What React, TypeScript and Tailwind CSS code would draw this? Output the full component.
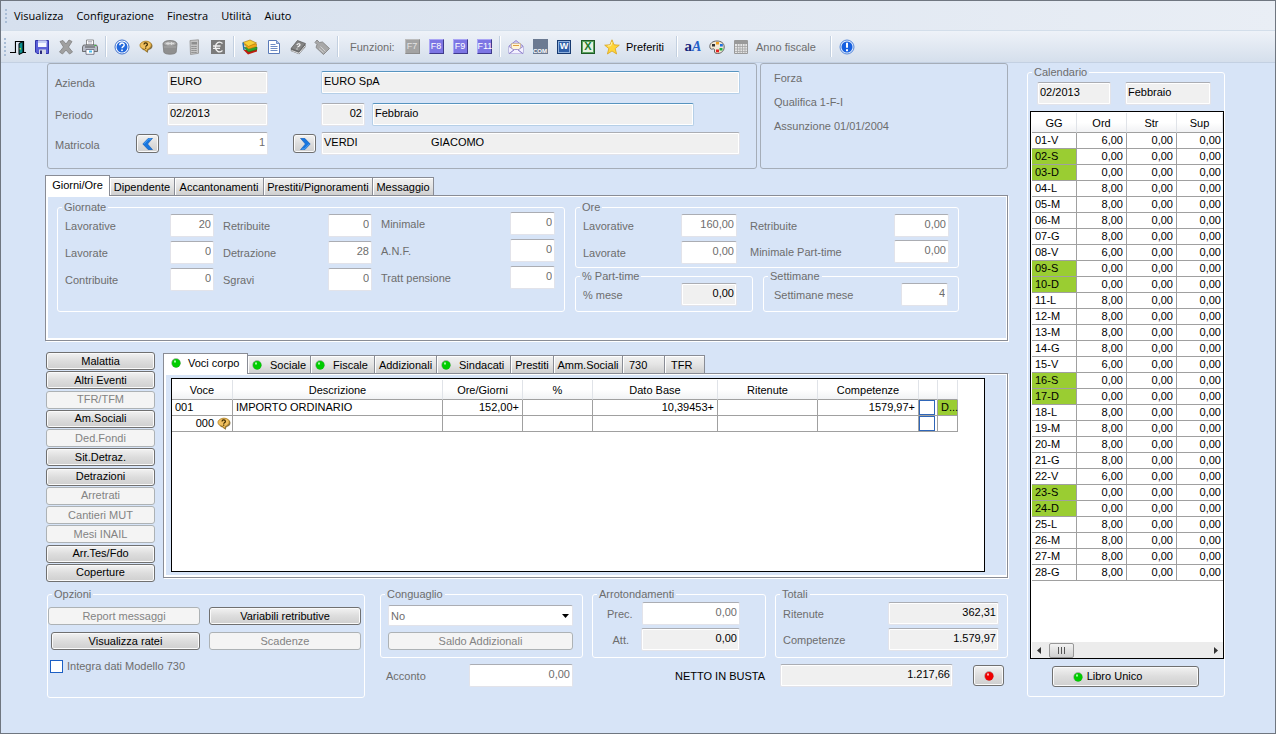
import React, { useId } from "react";

type Tone = "read" | "edit" | "hot";

const toneClass: Record<Tone, string> = {
  read: "bg-[#f0f0f0] text-black border-[#e2e3ea] border-t-[#abadb3]",
  edit: "bg-white text-[#6d6d6d] border-[#e2e3ea] border-t-[#abadb3]",
  hot: "bg-[#f0f0f0] text-black border-[#b5cfe7] border-t-[#5794bf]",
};

interface BoxProps {
  value: string;
  tone?: Tone;
  className?: string;
  right?: boolean;
  id?: string;
  label?: string;
}

function Box({ value, tone = "edit", className = "", right, id, label }: BoxProps) {
  return (
    <input
      id={id}
      aria-label={label}
      defaultValue={value}
      readOnly={tone !== "edit"}
      className={`h-[23px] min-w-0 rounded-[2px] border px-[2px] pb-[3px] outline-none shadow-[inset_0_0_0_1px_white] ${toneClass[tone]} ${right ? "text-right" : ""} ${className}`}
    />
  );
}

interface RowProps {
  label: string;
  value: string;
  tone?: Tone;
  rowClass?: string;
  width: string;
}

function Row({ label, value, tone, width, rowClass = "justify-between" }: RowProps) {
  const id = useId();
  return (
    <div className={`flex items-center ${rowClass}`}>
      <label htmlFor={id} className="whitespace-nowrap">{label}</label>
      <Box id={id} value={value} tone={tone} right className={width} />
    </div>
  );
}

function Group({ title, className = "", inner = "", children }: { title: string; className?: string; inner?: string; children: React.ReactNode }) {
  return (
    <fieldset className={`min-w-0 rounded-[3px] border border-white ${className}`}>
      <legend className="ml-[4px] h-[14px] px-[2px] leading-[14px]">{title}</legend>
      <div className={inner}>{children}</div>
    </fieldset>
  );
}

function Push({ children, off, className = "" }: { children: React.ReactNode; off?: boolean; className?: string }) {
  return (
    <button
      type="button"
      disabled={off}
      className={`flex items-center justify-center rounded-[3px] border leading-none ${
        off
          ? "border-[#adb2b5] bg-[#f4f4f4] text-[#838383]"
          : "border-[#707070] bg-linear-to-b from-[#f2f2f2] from-0% via-[#dddddd] via-50% to-[#cfcfcf] text-black shadow-[inset_0_0_0_1px_#fafafa]"
      } ${className}`}
    >
      {children}
    </button>
  );
}

function Led({ red }: { red?: boolean }) {
  return (
    <svg viewBox="0 0 10 10" className="size-[10px] shrink-0" aria-hidden="true">
      <circle cx="5" cy="5" r="4.700" fill={red ? "#b08080" : "#8aa58a"} />
      <circle cx="5.200" cy="5.200" r="4.200" fill={red ? "#f00000" : "#00cc00"} />
      <rect x="3" y="2.500" width="2" height="2" fill={red ? "#ffb0b0" : "#a0ffa0"} />
    </svg>
  );
}

function Tab({ text, active, led, start, className }: { text: string; active?: boolean; led?: boolean; start?: boolean; className: string }) {
  const place = led ? (active ? "gap-[7px] pl-[7px]" : "gap-2 pl-[4px]") : start ? "pl-[6px]" : "justify-center";
  return (
    <button
      type="button"
      role="tab"
      aria-selected={!!active}
      className={`flex items-center whitespace-nowrap border border-b-0 border-[#898c95] text-black ${
        active ? "z-10 -mb-px h-[21px] bg-white pb-[3px]" : "-ml-px h-[18px] bg-linear-to-b from-[#f2f2f2] via-[#e4e4e4] to-[#cfcfcf] shadow-[inset_1px_1px_0_white]"
      } ${place} ${className}`}
    >
      {led && <Led />}
      {text}
    </button>
  );
}

function Chevron({ flip }: { flip?: boolean }) {
  return (
    <svg viewBox="0 0 12 12" className={flip ? "size-3 rotate-180" : "size-3"} aria-hidden="true">
      <path d="M10.500 0.300 L6.300 0.300 L0.800 6 L6.300 11.700 L10.500 11.700 L5.600 6 Z" fill="#1877e0" stroke="#0d57b5" strokeWidth="0.600" />
      <path d="M9.300 1 L6.600 1 L2 5.800" stroke="#5bb0ff" strokeWidth="0.800" fill="none" />
    </svg>
  );
}

/* ---------- toolbar drawings ---------- */

function Svg({ children }: { children: React.ReactNode }) {
  return (
    <svg viewBox="0 0 16 16" className="size-4" fill="none" aria-hidden="true">
      {children}
    </svg>
  );
}

const Door = () => (
  <Svg>
    <path d="M0 13.500h6M12 13.500h4" stroke="#000" />
    <path d="M5.500 14V2.500h8V14" stroke="#000" strokeWidth="1.200" />
    <path d="M6 3h4v10H6z" fill="#dfe8f2" />
    <path d="M9 4.500 13 2.500v11L9 15.500z" fill="#0d8f8f" stroke="#000" />
    <path d="M10.200 9v1.500" stroke="#ff0" />
  </Svg>
);
const Floppy = () => (
  <Svg>
    <path d="M1.500 1.500h13v13H3l-1.500-1.500z" fill="#5b60d8" stroke="#3034a8" />
    <path d="M4 1.500h8.500V8H4z" fill="#f4f6ff" />
    <path d="M4 2h8.500v2H4z" fill="#c4cef4" />
    <path d="M5 10.500h7V15H5z" fill="#d4d8e6" />
    <path d="M6 11.500h2V15H6z" fill="#2a2a7c" />
  </Svg>
);
const Cross = () => (
  <Svg>
    <path d="M2 2.500 5 1.500 8 5l3-4 3 1.500L10.500 8l4 5-3 2L8 11l-3.500 4L1.500 13 5.500 8z" fill="#a0a0a0" stroke="#808080" strokeWidth="0.800" />
  </Svg>
);
const Printer = () => (
  <Svg>
    <path d="M4.500 1h7v5h-7z" fill="#fff" stroke="#777" strokeWidth="0.800" />
    <path d="M6 2.500h4M6 4h4" stroke="#99a" strokeWidth="0.700" />
    <path d="M1.500 6h13l1 2v4.500H.5V8z" fill="#b8bcc8" stroke="#555" strokeWidth="0.800" />
    <path d="M3 8h10" stroke="#555" />
    <path d="M4 10.500h8v4.800H4z" fill="#fff" stroke="#667" strokeWidth="0.800" />
    <path d="M7 11.500h3v2H7z" fill="#4bbdf0" />
    <path d="M12.500 6.500h1.500" stroke="#33c833" />
  </Svg>
);
const HelpBall = () => (
  <Svg>
    <circle cx="8" cy="8" r="7" fill="#fff" stroke="#2c62c8" strokeWidth="0.900" />
    <circle cx="8" cy="8" r="5.500" fill="#2268dc" />
    <path d="M5.800 6.300c0-3 4.400-3 4.400-.3 0 1.700-2.200 1.600-2.200 3.300" stroke="#fff" strokeWidth="1.400" />
    <rect x="7.200" y="10.500" width="1.600" height="1.600" fill="#fff" />
  </Svg>
);
const InfoBall = () => (
  <Svg>
    <circle cx="8" cy="8" r="7" fill="#dce8fa" stroke="#4a7fd8" strokeWidth="0.900" />
    <circle cx="8" cy="8" r="5.500" fill="#1660e0" />
    <path d="M8 3.800v5" stroke="#fff" strokeWidth="2" />
    <rect x="7" y="10.200" width="2" height="2" fill="#fff" />
  </Svg>
);
const AskBubble = () => (
  <Svg>
    <path d="M3 6.500C3 4 6 3 9 3s5.500 1.500 5.500 4-2 3.500-4 4l-1 3-2-2.500C5 11.500 3 9.500 3 6.500z" fill="#5f4712" opacity=".75" />
    <path d="M2 6.300C2 4 5 2.200 8 2.200s5.300 1.500 5.300 3.800S11 9.800 9.500 10.300l-1.200 2.500-1.500-2.500C4 10 2 8.600 2 6.300z" fill="#f0c060" stroke="#a87818" strokeWidth="0.800" />
    <path d="M6 5.400c0-2 3.400-2 3.400 0 0 1.300-1.700 1.200-1.700 2.300M7.700 8.600v1.200" stroke="#3a2800" strokeWidth="1.200" />
  </Svg>
);
const Basket = () => (
  <Svg>
    <path d="M1 5c0-2 3-3.500 7-3.500S15 3 15 5l-.8 8c-.2 1.500-3 2.200-6.200 2.200S2 14.500 1.800 13z" fill="#8f8f8f" stroke="#7c7c7c" strokeWidth="0.800" />
    <ellipse cx="8" cy="4.500" rx="5.800" ry="2" fill="#b4b4b4" />
    <path d="M4 4.500h8M6 3v3M9.500 3v3" stroke="#dedede" strokeWidth="0.900" />
    <path d="M2 8h12" stroke="#a8a8a8" />
  </Svg>
);
const Calc = () => (
  <Svg>
    <path d="M4 1.500 12.500.8v13.500L4.500 15.500z" fill="#c4c4c4" stroke="#989898" strokeWidth="0.900" />
    <path d="M5.500 3h5.500v2.500H5.500z" fill="#8e8e8e" />
    <path d="M5.500 7.500h5.500M5.500 9.500h5.500M5.500 11.500h5.500M5.500 13.500h5.500" stroke="#7b7b7b" strokeDasharray="1.200 .7" />
  </Svg>
);
const Euro = () => (
  <Svg>
    <path d="M1 1h14v14H1z" fill="#7b7b7b" />
    <path d="M12.500 4.500C9 1.500 5.500 4 5.500 8s3.500 6.500 7 3.500M3 7h7.500M3 9.300h7" stroke="#f2f2f2" strokeWidth="1.300" />
  </Svg>
);
const Books = () => (
  <Svg>
    <path d="M1.500 11 6 15.500l9-3V10z" fill="#c01d10" />
    <path d="M2 8.500 6.500 13 15 10.500V8z" fill="#2ca32c" stroke="#127012" strokeWidth="0.500" />
    <path d="M2 5.500 6.500 10 14.500 7.500V5z" fill="#f3a715" stroke="#b87000" strokeWidth="0.500" />
    <path d="M1 3.500 8 1l6.500 3L6.500 7.500z" fill="#f8d038" stroke="#a56f00" strokeWidth="0.600" />
    <path d="M1 3.500 2 11" stroke="#2070b0" strokeWidth="1.500" />
  </Svg>
);
const Doc = () => (
  <Svg>
    <path d="M2.500 1.500h8l3 3v10h-11z" fill="#fff" stroke="#5a7ab8" />
    <path d="M10.500 1.500v3h3" fill="#a9c0e8" stroke="#5a7ab8" strokeWidth="0.800" />
    <path d="M4.500 5.500h5M4.500 7.500h7M4.500 9.500h7M4.500 11.500h7" stroke="#6d8bc4" />
  </Svg>
);
const GreyBook = () => (
  <Svg>
    <path d="M.8 10 7.500 1.500 15.500 5v3L9 15.200.8 12z" fill="#6f6f6f" />
    <path d="M1 9.500 7.500 1.500l8 3L9 12.500z" fill="#858585" stroke="#5e5e5e" strokeWidth="0.700" />
    <path d="M1.500 11.500 9 14.300 15 7" stroke="#e0e0e0" />
    <path d="M6.800 6c1-2.200 4-1.300 3 .4-.7 1-2 .7-2.200 2M7 9.500v1" stroke="#fff" strokeWidth="1.100" />
  </Svg>
);
const GreyTag = () => (
  <Svg>
    <path d="M1 3.500 3 1l2.500 2.500L8.500 3l7 6.500-6 6L2 8.500 3 5.500z" fill="#a8a8a8" stroke="#858585" strokeWidth="0.900" />
    <path d="m5 9.500 4.500 4M6.500 7.500l5 5" stroke="#cfcfcf" />
  </Svg>
);
const Mail = () => (
  <Svg>
    <path d="M1 7 8 1.500 15 7v7.500H1z" fill="#cfc7f0" stroke="#8f83cc" strokeWidth="0.900" />
    <path d="M3.500 4.500h9v6h-9z" fill="#fff5d8" stroke="#c5a878" strokeWidth="0.600" />
    <path d="M5 6.500h6" stroke="#e0a040" />
    <path d="m1 7.500 5 3.500-5 3.500M15 7.500 10 11l5 3.500M1.500 14.500l5-4h3l5 4" fill="#f3f0ff" stroke="#8f83cc" strokeWidth="0.800" />
  </Svg>
);
const Star = () => (
  <Svg>
    <path d="m8 .8 2 5 5.300.4-4.100 3.400 1.400 5.400L8 12l-4.600 3 1.400-5.400L.7 6.200 6 5.800z" fill="#ffd53a" stroke="#dba51d" strokeWidth="0.800" />
    <path d="m8 3-1.300 3.700-3 .3" stroke="#fff3b0" />
  </Svg>
);
const Palette = () => (
  <Svg>
    <path d="M8 2C3.500 2 .8 4.500.8 7.500c0 2.500 1.700 3 2.700 2.500 1.500-.6 2.500.4 2 2-.4 1.500.8 2.500 3 2.500 4 0 6.700-3 6.700-6.500C15.200 4 12 2 8 2z" fill="#f1e8d5" stroke="#555" strokeWidth="0.900" />
    <rect x="3" y="5" width="3" height="2.500" fill="#333" />
    <rect x="7" y="3" width="3" height="2.500" fill="#f0a020" />
    <rect x="11" y="5" width="2.800" height="2.500" fill="#2070e0" />
    <rect x="10.500" y="9" width="3" height="2.500" fill="#20b040" />
    <rect x="7" y="10.500" width="3" height="2.800" fill="#e02020" />
  </Svg>
);
const GreyCal = () => (
  <Svg>
    <path d="M1.500 1.500h13v13h-13z" fill="#e4e4e4" stroke="#999" />
    <path d="M1.500 2h13v3h-13z" fill="#9a9a9a" />
    <path d="M2 7.500h12M2 10h12M2 12.500h12M4.500 5v9.500M7 5v9.500M9.500 5v9.500M12 5v9.500" stroke="#a5a5a5" strokeWidth="0.800" />
  </Svg>
);
const Word = () => (
  <span className="grid size-[14px] place-items-center border border-[#173a70] bg-[#2f5fa8] text-[9px] leading-none font-bold text-white shadow-[inset_0_0_0_1px_#8fb0dc]">W</span>
);
const Excel = () => (
  <span className="grid size-[14px] place-items-center border border-[#1d5a24] bg-[#e4f1e2] text-[11px] leading-none font-bold text-[#1f7a2c] shadow-[inset_0_0_0_1px_#5ba35f]">X</span>
);
const Com = () => (
  <span className="flex size-[15px] items-end justify-center overflow-hidden bg-[#6b7a92] text-[6px] leading-[6px] font-bold text-white">COM</span>
);
const LetterA = () => (
  <span className="flex items-baseline font-['Liberation_Serif'] leading-none font-bold">
    <span className="text-[15px] text-[#16267c]">a</span>
    <span className="text-[14px] text-[#2460c8] italic">A</span>
  </span>
);
const FKey = ({ text, off }: { text: string; off?: boolean }) => (
  <span
    className={`grid size-[15px] place-items-center border text-[9px] leading-none ${
      off
        ? "border-[#8b8b8b] border-t-[#bcbcbc] border-l-[#bcbcbc] bg-[#a3a3a3] text-[#e3e3e3]"
        : "border-[#3f3a8c] border-t-[#aaa5f5] border-l-[#aaa5f5] bg-[#7d76e4] text-white"
    }`}
  >
    {text}
  </span>
);

function Tool({ name, children, className = "w-6 justify-center" }: { name: string; children: React.ReactNode; className?: string }) {
  return (
    <button type="button" aria-label={name} className={`flex h-6 shrink-0 items-center ${className}`}>
      {children}
    </button>
  );
}

const Sep = () => <span className="mx-[3px] h-[21px] w-[2px] shrink-0 border-l border-[#c3d0e0] bg-white" />;

const Grip = ({ className }: { className: string }) => (
  <span className={`w-[2px] shrink-0 bg-[repeating-linear-gradient(to_bottom,#a9bdd6_0px,#a9bdd6_2px,transparent_2px,transparent_4px)] ${className}`} />
);

/* ---------- data ---------- */

const sideButtons: [string, boolean][] = [
  ["Malattia", true],
  ["Altri Eventi", true],
  ["TFR/TFM", false],
  ["Am.Sociali", true],
  ["Ded.Fondi", false],
  ["Sit.Detraz.", true],
  ["Detrazioni", true],
  ["Arretrati", false],
  ["Cantieri MUT", false],
  ["Mesi INAIL", false],
  ["Arr.Tes/Fdo", true],
  ["Coperture", true],
];

const weekdays = ["V", "S", "D", "L", "M", "M", "G"];
const days = Array.from({ length: 28 }, (_, i) => {
  const letter = weekdays[i % 7];
  const rest = letter === "S" || letter === "D";
  return {
    label: `${String(i + 1).padStart(2, "0")}-${letter}`,
    rest,
    ord: rest ? "0,00" : letter === "V" ? "6,00" : "8,00",
  };
});

const head = "h-[20px] border-b border-[#a0a0a0] border-r border-r-[#e0e3e8] bg-linear-to-b from-white from-50% to-[#f1f2f4] p-0 text-center font-normal";
const cell = "h-[16px] border-r border-b border-[#a0a0a0] px-[3px] py-0 leading-[15px]";
const tick = "block h-[15px] w-[16px] appearance-none border border-[#2f66b8] bg-white";

export default function App() {
  const azienda = useId();
  const periodo = useId();
  const matricola = useId();
  const acconto = useId();
  const netto = useId();

  return (
    <div className="min-h-screen w-full border border-[#6f7680] bg-[#d7e4f7] font-['Liberation_Sans',Arial,sans-serif] text-[11px] leading-[16px] text-[#6d6d6d]">
      <nav className="flex h-[29px] items-center bg-linear-to-r from-[#d6e0ee] to-[#e9eef5] pl-1 font-['Open_Sans',sans-serif] text-black">
        <Grip className="mr-[7px] h-[14px]" />
        <div className="flex gap-[13px]">
          {["Visualizza", "Configurazione", "Finestra", "Utilità", "Aiuto"].map((m) => (
            <button type="button" key={m}>{m}</button>
          ))}
        </div>
      </nav>

      <div className="flex h-[33px] items-center border-t border-[#d3deea] border-b border-b-[#c3d0e2] bg-linear-to-b from-[#eef2f8] to-[#d5dfec] pl-[3px]" role="toolbar">
        <Grip className="h-[18px]" />
        <Tool name="Esci"><Door /></Tool>
        <Tool name="Salva"><Floppy /></Tool>
        <Tool name="Elimina"><Cross /></Tool>
        <Tool name="Stampa"><Printer /></Tool>
        <Sep />
        <Tool name="Guida"><HelpBall /></Tool>
        <Tool name="Chiedi"><AskBubble /></Tool>
        <Tool name="Archivio"><Basket /></Tool>
        <Tool name="Calcolatrice"><Calc /></Tool>
        <Tool name="Euro"><Euro /></Tool>
        <Sep />
        <Tool name="Libri"><Books /></Tool>
        <Tool name="Documento"><Doc /></Tool>
        <Tool name="Manuale"><GreyBook /></Tool>
        <Tool name="Etichetta"><GreyTag /></Tool>
        <Sep />
        <span className="w-[58px] shrink-0 pl-2">Funzioni:</span>
        <Tool name="F7"><FKey text="F7" off /></Tool>
        <Tool name="F8"><FKey text="F8" /></Tool>
        <Tool name="F9"><FKey text="F9" /></Tool>
        <Tool name="F11"><FKey text="F11" /></Tool>
        <Sep />
        <Tool name="Posta"><Mail /></Tool>
        <Tool name="Com"><Com /></Tool>
        <Tool name="Word"><Word /></Tool>
        <Tool name="Excel"><Excel /></Tool>
        <Tool name="Preferiti" className="w-[73px] gap-[6px] pl-1 text-black"><Star />Preferiti</Tool>
        <Sep />
        <Tool name="Carattere"><LetterA /></Tool>
        <Tool name="Colori"><Palette /></Tool>
        <Tool name="Anno fiscale" className="w-[98px] gap-[7px] pl-1"><GreyCal />Anno fiscale</Tool>
        <Sep />
        <Tool name="Informazioni"><InfoBall /></Tool>
      </div>

      <div className="flex items-start justify-between gap-[19px] pr-[50px] pl-11">
        <main className="min-w-0 flex-1">
          <div className="flex gap-[3px] pl-[2px]">
            <section className="flex min-w-0 flex-1 flex-col rounded-[3px] border border-[#a5adb8] pt-[7px] pr-4 pb-[13px] pl-[7px]">
              <div className="flex items-center">
                <label htmlFor={azienda} className="w-[112px]">Azienda</label>
                <Box id={azienda} value="EURO" tone="read" className="w-[101px]" />
                <Box label="Ragione sociale" value="EURO SpA" tone="hot" className="ml-[53px] flex-1" />
              </div>
              <div className="mt-[9px] flex items-center">
                <label htmlFor={periodo} className="w-[112px]">Periodo</label>
                <Box id={periodo} value="02/2013" tone="read" className="w-[101px]" />
                <Box label="Numero mese" value="02" tone="read" right className="ml-[53px] w-[44px]" />
                <Box label="Mese" value="Febbraio" tone="hot" className="mr-[46px] ml-[7px] flex-1" />
              </div>
              <div className="mt-[6px] flex items-center">
                <label htmlFor={matricola} className="w-[81px] pt-[3px]">Matricola</label>
                <Push className="h-[19px] w-[23px]"><Chevron /></Push>
                <Box id={matricola} value="1" right className="ml-2 w-[101px]" />
                <Push className="ml-[25px] h-[19px] w-[23px]"><Chevron flip /></Push>
                <span className="ml-[5px] flex h-[23px] flex-1 rounded-[2px] border border-[#e2e3ea] border-t-[#abadb3] bg-[#f0f0f0] px-[2px] pt-px text-black shadow-[inset_0_0_0_1px_white]">
                  <span className="w-[107px]">VERDI</span>
                  <span>GIACOMO</span>
                </span>
              </div>
            </section>
            <section className="flex w-[248px] flex-col gap-2 rounded-[3px] border border-[#a5adb8] px-[13px] pt-[6px]">
              <p>Forza</p>
              <p>Qualifica 1-F-I</p>
              <p>Assunzione 01/01/2004</p>
            </section>
          </div>

          <div className="mt-[6px] flex items-end" role="tablist">
            <Tab text="Giorni/Ore" active className="w-[65px]" />
            <Tab text="Dipendente" className="w-[66px]" />
            <Tab text="Accantonamenti" className="w-[90px]" />
            <Tab text="Prestiti/Pignoramenti" className="w-[110px]" />
            <Tab text="Messaggio" className="w-[62px]" />
          </div>
          <section className="border border-[#898c95] bg-white pt-px pr-px pb-[2px] pl-[2px] shadow-[1px_1px_0_white]">
            <div className="flex gap-[10px] bg-[#d7e4f7] pt-[3px] pb-[26px] pl-[9px]">
              <Group title="Giornate" className="w-[508px]" inner="flex gap-[9px] pl-[7px]">
                <div className="flex w-[149px] flex-col gap-1">
                  <Row label="Lavorative" value="20" width="w-[44px]" />
                  <Row label="Lavorate" value="0" width="w-[44px]" />
                  <Row label="Contribuite" value="0" width="w-[44px]" />
                </div>
                <div className="flex w-[149px] flex-col gap-1">
                  <Row label="Retribuite" value="0" width="w-[44px]" />
                  <Row label="Detrazione" value="28" width="w-[44px]" />
                  <Row label="Sgravi" value="0" width="w-[44px]" />
                </div>
                <div className="-mt-[2px] flex w-[174px] flex-col gap-1">
                  <Row label="Minimale" value="0" width="w-[45px]" />
                  <Row label="A.N.F." value="0" width="w-[45px]" />
                  <Row label="Tratt pensione" value="0" width="w-[45px]" />
                </div>
              </Group>
              <div className="flex w-[384px] flex-col">
                <Group title="Ore" inner="flex gap-[13px] pr-[9px] pb-[3px] pl-[7px]">
                  <div className="flex w-[154px] flex-col gap-1">
                    <Row label="Lavorative" value="160,00" width="w-[56px]" />
                    <Row label="Lavorate" value="0,00" width="w-[56px]" />
                  </div>
                  <div className="flex flex-1 flex-col gap-[3px]">
                    <Row label="Retribuite" value="0,00" width="w-[55px]" />
                    <Row label="Minimale Part-time" value="0,00" width="w-[55px]" />
                  </div>
                </Group>
                <div className="mt-[1px] flex gap-[10px]">
                  <Group title="% Part-time" className="w-[178px]" inner="pr-[15px] pb-[5px] pl-[7px]">
                    <Row label="% mese" value="0,00" tone="read" width="w-[56px]" />
                  </Group>
                  <Group title="Settimane" className="flex-1" inner="pr-[10px] pb-[5px] pl-[10px]">
                    <Row label="Settimane mese" value="4" width="w-[47px]" />
                  </Group>
                </div>
              </div>
            </div>
          </section>

          <div className="mt-[11px] flex gap-2">
            <div className="flex h-[230px] w-[110px] shrink-0 flex-col justify-between pl-px">
              {sideButtons.map(([text, on]) => (
                <Push key={text} off={!on} className="h-[18px] w-full">{text}</Push>
              ))}
            </div>
            <div className="min-w-0 flex-1 pt-px">
              <div className="flex items-end" role="tablist">
                <Tab text="Voci corpo" active led className="w-[85px]" />
                <Tab text="Sociale" led className="w-[64px]" />
                <Tab text="Fiscale" led className="w-[65px]" />
                <Tab text="Addizionali" className="w-[63px]" />
                <Tab text="Sindacati" led className="w-[75px]" />
                <Tab text="Prestiti" className="w-[44px]" />
                <Tab text="Amm.Sociali" className="w-[70px]" />
                <Tab text="730" start className="w-[43px]" />
                <Tab text="TFR" start className="w-[41px]" />
              </div>
              <section className="border border-[#898c95] bg-white pt-px pr-px pb-[2px] pl-[2px] shadow-[1px_1px_0_white]">
                <div className="bg-[#d7e4f7] pt-[3px] pr-[21px] pb-[3px] pl-[5px]">
                  <div className="h-[194px] overflow-hidden border border-black bg-white pt-px">
                    <table className="w-[786px] table-fixed border-separate border-spacing-0 text-black">
                      <colgroup>
                        <col className="w-[61px]" />
                        <col className="w-[210px]" />
                        <col className="w-[80px]" />
                        <col className="w-[70px]" />
                        <col className="w-[125px]" />
                        <col className="w-[100px]" />
                        <col className="w-[101px]" />
                        <col className="w-[19px]" />
                        <col className="w-[20px]" />
                      </colgroup>
                      <thead>
                        <tr>
                          {["Voce", "Descrizione", "Ore/Giorni", "%", "Dato Base", "Ritenute", "Competenze", "", ""].map((h, i) => (
                            <th key={i} className={head}>{h}</th>
                          ))}
                        </tr>
                      </thead>
                      <tbody>
                        <tr>
                          <td className={cell}>001</td>
                          <td className={cell}>IMPORTO ORDINARIO</td>
                          <td className={`${cell} text-right`}>152,00+</td>
                          <td className={cell}></td>
                          <td className={`${cell} text-right`}>10,39453+</td>
                          <td className={cell}></td>
                          <td className={`${cell} text-right`}>1579,97+</td>
                          <td className="border-r border-b border-[#a0a0a0] p-0">
                            <input type="checkbox" aria-label="Seleziona riga 001" className={tick} />
                          </td>
                          <td className={`${cell} bg-[#9acd32] whitespace-nowrap`}>D...</td>
                        </tr>
                        <tr>
                          <td className={cell}>
                            <span className="flex items-center justify-end gap-[2px]">000 <span className="-my-1 -mr-[3px] h-4"><AskBubble /></span></span>
                          </td>
                          {[0, 1, 2, 3, 4, 5].map((n) => (
                            <td key={n} className={cell}></td>
                          ))}
                          <td className="border-r border-b border-[#a0a0a0] p-0">
                            <input type="checkbox" aria-label="Seleziona riga 000" className={tick} />
                          </td>
                          <td className={cell}></td>
                        </tr>
                      </tbody>
                    </table>
                  </div>
                </div>
              </section>
            </div>
          </div>

          <div className="mt-[5px] flex items-start pl-[2px]">
            <Group title="Opzioni" className="h-[111px] w-[318px] shrink-0">
              <div className="grid grid-cols-[152px_152px] gap-x-[9px] gap-y-[7px] pt-[6px]">
                <Push off className="h-[18px]">Report messaggi</Push>
                <Push className="h-[18px]">Variabili retributive</Push>
                <Push className="ml-[3px] h-[18px]">Visualizza ratei</Push>
                <Push off className="h-[18px]">Scadenze</Push>
              </div>
              <label className="mt-2 flex items-center gap-1 pl-[2px]">
                <input type="checkbox" className="size-[13px] appearance-none border border-[#1c5fc4] bg-white" />
                Integra dati Modello 730
              </label>
            </Group>
            <div className="ml-[15px] min-w-0 flex-1">
              <div className="flex">
                <Group title="Conguaglio" className="h-[71px] w-[203px]" inner="pr-[9px] pl-[7px]">
                  <div className="relative mt-[4px]">
                    <select aria-label="Conguaglio" className="h-[21px] w-full appearance-none rounded-[2px] border border-[#e2e3ea] border-t-[#abadb3] bg-white pl-[2px]">
                      <option>No</option>
                    </select>
                    <svg viewBox="0 0 7 4" className="pointer-events-none absolute top-[9px] right-[4px] h-1 w-[7px]" aria-hidden="true">
                      <path d="M0 0h7L3.500 4z" fill="#000" />
                    </svg>
                  </div>
                  <Push off className="mt-[6px] h-[18px] w-full">Saldo Addizionali</Push>
                </Group>
                <Group title="Arrotondamenti" className="ml-[9px] h-[71px] w-[174px]" inner="mt-[1px] flex flex-col gap-[3px] pr-[25px] pl-[14px]">
                  <Row label="Prec." value="0,00" width="w-[99px]" rowClass="justify-end gap-[9px]" />
                  <Row label="Att." value="0,00" tone="read" width="w-[99px]" rowClass="justify-end gap-[12px]" />
                </Group>
                <Group title="Totali" className="ml-[9px] h-[71px] flex-1" inner="mt-[1px] flex flex-col gap-[3px] pr-[8px] pl-[7px]">
                  <Row label="Ritenute" value="362,31" tone="read" width="w-[111px]" />
                  <Row label="Competenze" value="1.579,97" tone="read" width="w-[111px]" />
                </Group>
              </div>
              <div className="mt-[6px] flex items-center pl-[6px]">
                <label htmlFor={acconto} className="w-[83px]">Acconto</label>
                <Box id={acconto} value="0,00" right className="w-[104px]" />
                <label htmlFor={netto} className="ml-auto text-black">NETTO IN BUSTA</label>
                <Box id={netto} value="1.217,66" tone="read" right className="ml-[15px] w-[173px]" />
                <Push className="mr-1 ml-5 h-[21px] w-[31px]"><Led red /></Push>
              </div>
            </div>
          </div>
        </main>

        <aside className="w-[198px] shrink-0 pt-[2px]">
          <Group title="Calendario" inner="pb-[9px]">
            <div className="flex gap-[14px] pt-[3px] pl-[9px]">
              <Box label="Periodo calendario" value="02/2013" tone="read" className="w-[74px]" />
              <Box label="Mese calendario" value="Febbraio" tone="read" className="w-[86px]" />
            </div>
            <div className="mt-[6px] ml-[2px] flex h-[548px] flex-col justify-between overflow-hidden border border-black bg-white pt-px pl-px">
              <table className="w-full table-fixed border-separate border-spacing-0 text-black">
                <colgroup>
                  <col className="w-[45px]" />
                  <col className="w-[50px]" />
                  <col className="w-[50px]" />
                  <col />
                </colgroup>
                <thead>
                  <tr>
                    {["GG", "Ord", "Str", "Sup"].map((h) => (
                      <th key={h} className={head}>{h}</th>
                    ))}
                  </tr>
                </thead>
                <tbody>
                  {days.map((d) => (
                    <tr key={d.label}>
                      <td className={`${cell} ${d.rest ? "bg-[#9acd32]" : ""}`}>{d.label}</td>
                      <td className={`${cell} text-right`}>{d.ord}</td>
                      <td className={`${cell} text-right`}>0,00</td>
                      <td className="h-[16px] border-b border-[#a0a0a0] px-[2px] py-0 text-right leading-[15px]">0,00</td>
                    </tr>
                  ))}
                </tbody>
              </table>
              <div className="flex h-[16px] items-center justify-between bg-[#ececec] px-[5px]">
                <div className="flex items-center gap-[8px]">
                  <svg viewBox="0 0 4 7" className="h-[7px] w-1" aria-hidden="true"><path d="M4 0v7L0 3.500z" fill="#333" /></svg>
                  <span className="flex h-[15px] w-[25px] items-center justify-center gap-[2px] rounded-[2px] border border-[#979797] bg-linear-to-b from-[#f3f3f3] to-[#cfcfcf]">
                    <i className="h-[7px] w-px bg-[#555]" />
                    <i className="h-[7px] w-px bg-[#555]" />
                    <i className="h-[7px] w-px bg-[#555]" />
                  </span>
                </div>
                <svg viewBox="0 0 4 7" className="h-[7px] w-1" aria-hidden="true"><path d="M0 0v7l4-3.500z" fill="#333" /></svg>
              </div>
            </div>
            <Push className="mt-[7px] ml-[24px] h-[21px] w-[147px] gap-1 pr-[36px]"><Led />Libro Unico</Push>
          </Group>
        </aside>
      </div>
    </div>
  );
}
